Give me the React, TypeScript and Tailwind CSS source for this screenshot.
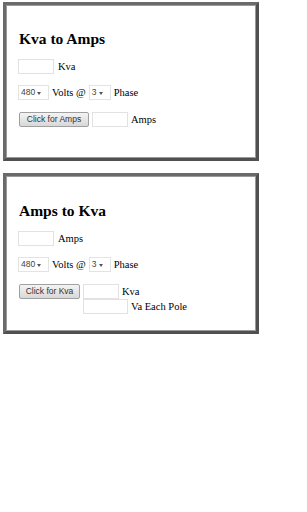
import React from "react";

const serif = { fontFamily: '"Liberation Serif", "Times New Roman", serif' };
const sans = { fontFamily: '"Liberation Sans", Arial, sans-serif' };

function Sel({ value, w }: { value: string; w: string }) {
  return (
    <div className={`relative flex items-center h-[15px] ${w} border border-[#e3e3e3] bg-white text-[8.5px] leading-[13px] text-[#444]`} style={sans}>
      <span className="pl-[2px]">{value}</span>
      <svg className="absolute right-[7px] top-[6px]" width="4" height="3" viewBox="0 0 4 3"><path d="M0 0h4L2 3z" fill="#555" /></svg>
    </div>
  );
}

function Btn({ label, w }: { label: string; w: string }) {
  return (
    <div className={`flex items-center justify-center whitespace-nowrap h-[15px] ${w} border border-[#a0a0a0] rounded-[2px] bg-gradient-to-b from-[#f4f4f4] to-[#d8d8d8] text-[8.5px] leading-[13px] text-[#333]`} style={sans}>
      {label}
    </div>
  );
}

function Inp({ w }: { w: string }) {
  return <div className={`h-[15px] ${w} border border-[#e2e2e2] bg-white`} />;
}

function Row({ children, cls = "" }: { children: React.ReactNode; cls?: string }) {
  return <div className={`flex items-center gap-[3px] text-[10.5px] leading-[15px] text-black ${cls}`}>{children}</div>;
}

const boxCls = "w-[256px] border-[3px] border-t-[#6a6a6a] border-l-[#6a6a6a] border-r-[#505050] border-b-[#505050] pl-[12px]";
const boxStyle = { borderStyle: "solid", boxShadow: "inset -1px -1px 0 #9a9a9a, inset 1px 1px 0 #9a9a9a" } as React.CSSProperties;

export default function App() {
  return (
    <div className="w-[307px] h-[512px] bg-white" style={serif}>
      <div className="pt-[2px] pl-[3px]">
        <div className={`${boxCls} h-[159px]`} style={boxStyle}>
          <div className="pt-[24px] pl-[1px] text-[15.5px] font-bold leading-[20px]">Kva to Amps</div>
          <Row cls="mt-[10px]"><Inp w="w-[36px]" /><span className="ml-[1px]">Kva</span></Row>
          <Row cls="mt-[11px]"><Sel value="480" w="w-[31px]" /><span>Volts @</span><Sel value="3" w="w-[22px]" /><span>Phase</span></Row>
          <Row cls="mt-[12px] pl-[1px]"><Btn label="Click for Amps" w="w-[70px]" /><Inp w="w-[36px]" /><span>Amps</span></Row>
        </div>
        <div className={`${boxCls} mt-[12px] h-[161px]`} style={boxStyle}>
          <div className="pt-[25px] pl-[1px] text-[15.5px] font-bold leading-[20px]">Amps to Kva</div>
          <Row cls="mt-[10px]"><Inp w="w-[36px]" /><span className="ml-[1px]">Amps</span></Row>
          <Row cls="mt-[11px]"><Sel value="480" w="w-[31px]" /><span>Volts @</span><Sel value="3" w="w-[22px]" /><span>Phase</span></Row>
          <div className="mt-[12px] pl-[1px] flex items-start gap-[3px]">
            <Btn label="Click for Kva" w="w-[61px]" />
            <div className="flex flex-col">
              <Row><Inp w="w-[36px]" /><span>Kva</span></Row>
              <Row><Inp w="w-[45px]" /><span>Va Each Pole</span></Row>
            </div>
          </div>
        </div>
      </div>
    </div>
  );
}
